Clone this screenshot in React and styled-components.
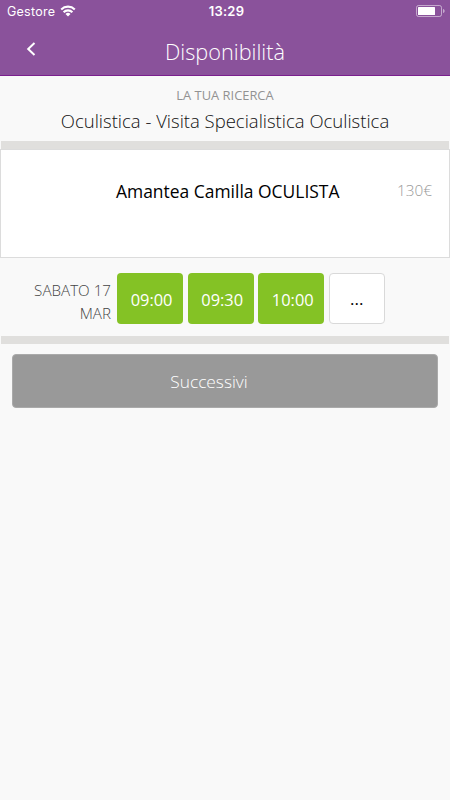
import React from "react";
import styled, { createGlobalStyle } from "styled-components";

const GlobalStyle = createGlobalStyle`
  * {
    box-sizing: border-box;
  }
  body {
    margin: 0;
    background-color: #f9f9f9;
    font-family: "Open Sans", sans-serif;
    font-weight: 300;
  }
  button {
    font-family: inherit;
    cursor: pointer;
  }
`;

const Screen = styled.div`
  width: 450px;
  height: 800px;
  overflow: hidden;
  background-color: #f9f9f9;
`;

const Header = styled.header`
  height: 76px;
  background-color: #8a529b;
  border-bottom: 1px solid #7b1f8e;
  color: white;
`;

const StatusBar = styled.div`
  display: grid;
  grid-template-columns: 1fr auto 1fr;
  align-items: center;
  height: 23px;
  padding: 0 5px 0 7px;
  font-family: Inter, sans-serif;
  font-size: 12.5px;
  font-weight: 400;
`;

const Carrier = styled.div`
  display: flex;
  align-items: center;
  gap: 5px;
  letter-spacing: 0.25px;

  svg {
    margin-bottom: 1px;
  }
`;

const Clock = styled.div`
  padding: 0 0 1px 1px;
  font-size: 13px;
  font-weight: 600;
  letter-spacing: 0.25px;
`;

const Battery = styled.svg`
  justify-self: end;
  margin-bottom: 1px;
`;

const NavBar = styled.div`
  display: grid;
  grid-template-columns: 62px 1fr 62px;
  align-items: center;
  height: 52px;
`;

const BackButton = styled.button`
  display: flex;
  justify-content: center;
  height: 40px;
  padding: 13px 0 0;
  border: none;
  background: none;
  color: white;
`;

const Title = styled.h1`
  margin: 5px 0 0;
  font-size: 21.7px;
  font-weight: 300;
  line-height: 30px;
  text-align: center;
`;

const Search = styled.section`
  height: 65px;
  padding-top: 9px;
  text-align: center;
`;

const SearchLabel = styled.div`
  font-size: 12.9px;
  font-weight: 400;
  line-height: 20px;
  color: #929292;
`;

const SearchText = styled.div`
  margin-top: 2px;
  font-size: 18.5px;
  line-height: 28px;
  color: #111;
  white-space: nowrap;
`;

const Divider = styled.div`
  height: ${(props) => props.$size}px;
  margin: 0 1px;
  background-color: #e0dfdd;
`;

const DoctorCard = styled.section`
  display: grid;
  grid-template-columns: 1fr 224px 1fr;
  height: 109px;
  padding: 26px 17px 0;
  border: 1px solid #dcdcdc;
  background-color: white;
`;

const DoctorName = styled.div`
  font-size: 17.45px;
  font-weight: 400;
  line-height: 30px;
  color: #000;
  grid-column: 2;
  padding-left: 3px;
  white-space: nowrap;
`;

const Price = styled.div`
  padding-top: 1px;
  font-size: 15.3px;
  line-height: 26px;
  color: #999;
  text-align: right;
`;

const Slots = styled.section`
  display: flex;
  height: 78px;
  padding: 15px 0 0 22px;
`;

const Day = styled.div`
  width: 90px;
  padding: 6px 1px 0 0;
  margin-right: 5px;
  font-size: 15.2px;
  line-height: 23px;
  color: #444;
  text-align: right;
`;

const Times = styled.div`
  display: flex;
  gap: 4.4px;
`;

const Slot = styled.button`
  width: 66.2px;
  height: 51px;
  padding: 1px 0 0 3px;
  border: none;
  border-radius: 4px;
  background-color: #84c225;
  color: white;
  font-size: 16.4px;
  font-weight: 400;
`;

const MoreButton = styled.button`
  width: 56px;
  height: 51px;
  padding: 0;
  border: 1px solid #d9d9d9;
  border-radius: 4px;
  background-color: white;
  color: #000;
  font-size: 17px;
  font-weight: 400;
`;

const NextButton = styled.button`
  display: block;
  width: 426px;
  height: 54px;
  margin: 10px 12px 0;
  padding: 1px 32px 0 0;
  border: 1px solid #aaa;
  border-radius: 4px;
  background-color: #999;
  color: white;
  font-size: 17.3px;
  font-weight: 300;
`;

const times = ["09:00", "09:30", "10:00"];

const WifiIcon = () => (
  <svg width="16" height="12" viewBox="0 0 16 12" fill="none" stroke="currentColor" strokeWidth="2.1">
    <path d="M1.2 4.4a9.7 9.7 0 0 1 13.6 0" />
    <path d="M3.6 7.2a6.2 6.2 0 0 1 8.8 0" />
    <path d="M5.5 9a3.6 3.6 0 0 1 5 0L8 11.6z" fill="currentColor" stroke="none" />
  </svg>
);

const BatteryIcon = () => (
  <Battery width="29" height="12" viewBox="0 0 29 12">
    <rect x="0.5" y="0.5" width="25" height="11" rx="2" fill="none" stroke="#fff" strokeOpacity="0.5" />
    <rect x="2" y="2" width="17" height="8" rx="0.5" fill="#fff" />
    <path d="M27 4c2.2.6 2.2 3.4 0 4z" fill="#fff" fillOpacity="0.5" />
  </Battery>
);

const App = () => (
  <Screen>
    <GlobalStyle />
    <Header>
      <StatusBar>
        <Carrier>
          <span>Gestore</span>
          <WifiIcon />
        </Carrier>
        <Clock>13:29</Clock>
        <BatteryIcon />
      </StatusBar>
      <NavBar>
        <BackButton aria-label="Indietro">
          <svg width="10" height="14" viewBox="0 0 10 14" fill="none" stroke="currentColor" strokeWidth="2">
            <path d="M8.5 1L2.2 7l6.3 6" />
          </svg>
        </BackButton>
        <Title>Disponibilità</Title>
      </NavBar>
    </Header>
    <Search>
      <SearchLabel>LA TUA RICERCA</SearchLabel>
      <SearchText>Oculistica - Visita Specialistica Oculistica</SearchText>
    </Search>
    <Divider $size={8} />
    <DoctorCard>
      <DoctorName>Amantea Camilla OCULISTA</DoctorName>
      <Price>130€</Price>
    </DoctorCard>
    <Slots>
      <Day>SABATO 17 MAR</Day>
      <Times>
        {times.map((time) => (
          <Slot key={time}>{time}</Slot>
        ))}
        <MoreButton>...</MoreButton>
      </Times>
    </Slots>
    <Divider $size={8} />
    <NextButton>Successivi</NextButton>
  </Screen>
);

export default App;
